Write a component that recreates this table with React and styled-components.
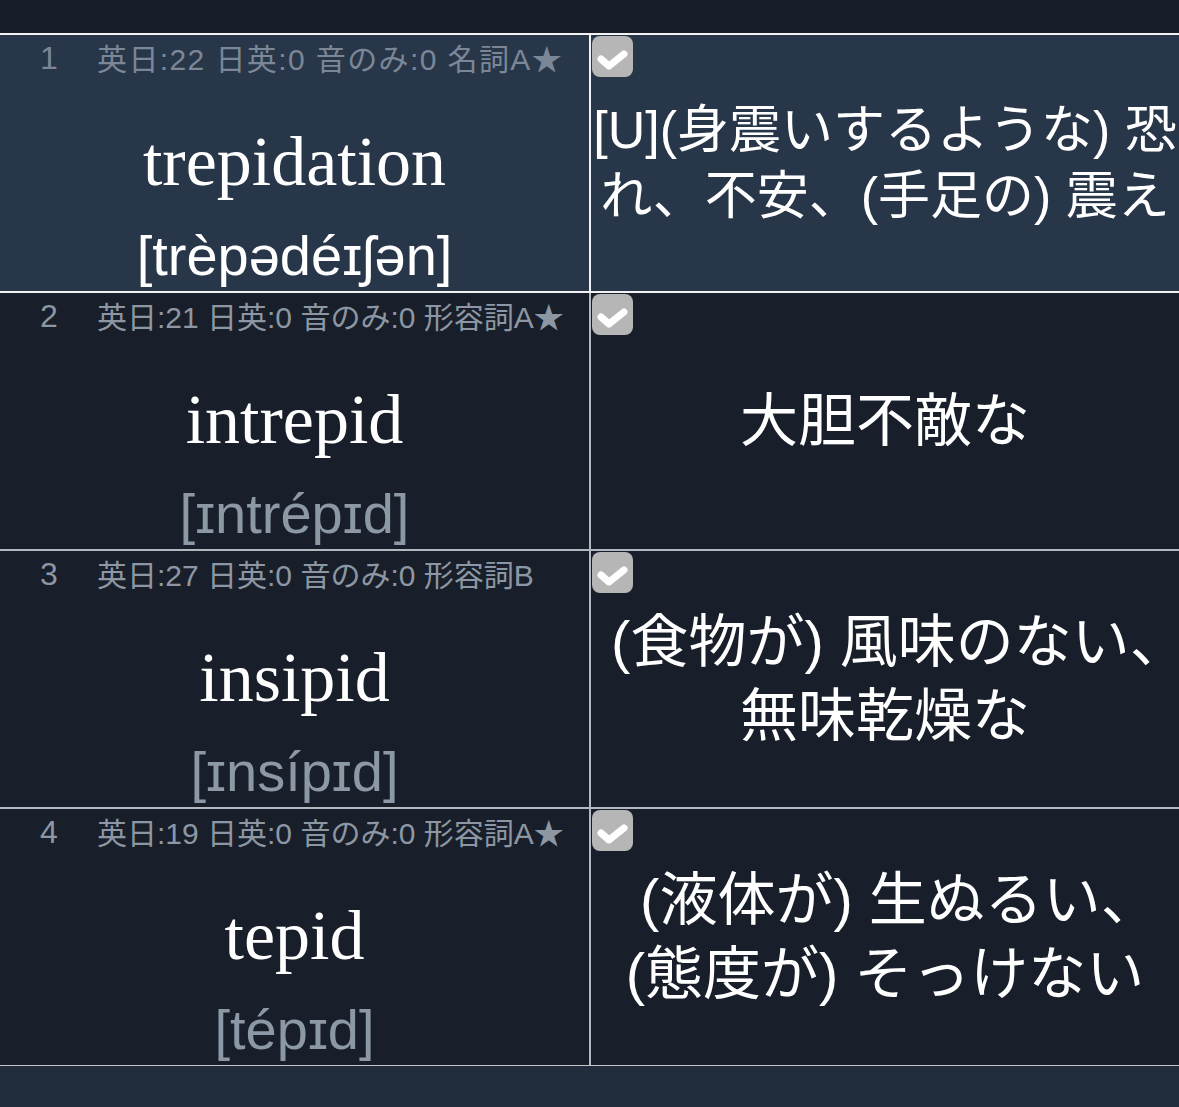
import styled, { createGlobalStyle } from 'styled-components';

const GlobalStyle = createGlobalStyle`
	body {
		margin: 0;
		background-color: #181f2a;
		font-family: 'Liberation Sans', 'Noto Sans CJK JP', sans-serif;
	}
`;

const Screen = styled.div`
	width: 1179px;
	height: 1107px;
	display: flex;
	flex-direction: column;
	background-color: #181f2a;
	overflow: hidden;
`;

const TopBar = styled.div`
	height: 33px;
	background-color: #181e29;
`;

const Row = styled.div`
	height: 256px;
	display: grid;
	grid-template-columns: 589px 1fr;
	border-top: 2px solid ${(props) => props.$line};
	background-color: ${(props) => (props.$selected ? '#283649' : '#181f2a')};
`;

const Left = styled.div`
	display: grid;
	grid-template-rows: 44px 1fr auto;
	min-width: 0;
`;

const Meta = styled.div`
	display: flex;
	align-items: center;
	color: ${(props) => (props.$selected ? '#7b8797' : '#8d97a3')};
	white-space: nowrap;
`;

const Num = styled.span`
	width: 50px;
	margin-left: 24px;
	margin-right: 23px;
	padding-top: 3px;
	text-align: center;
	font-size: 32px;
`;

const Info = styled.span`
	font-size: 30px;
	letter-spacing: ${(props) => (props.$wide ? '1.4px' : '0')};
`;

const Word = styled.div`
	display: flex;
	align-items: center;
	justify-content: center;
	padding-top: 22px;
	font-family: 'Liberation Serif', serif;
	font-size: 70px;
	line-height: 1;
	color: #ffffff;
`;

const Pron = styled.div`
	text-align: center;
	padding-bottom: 3px;
	font-family: 'Liberation Sans', 'DejaVu Sans', sans-serif;
	font-size: 56px;
	color: ${(props) => (props.$selected ? '#ffffff' : '#8c98a5')};
`;

const Right = styled.div`
	position: relative;
	display: flex;
	align-items: center;
	justify-content: center;
	border-left: 2px solid ${(props) => (props.$selected ? '#f2f2f2' : '#b4b8bf')};
`;

const Check = styled.div`
	position: absolute;
	top: 1px;
	left: 1px;
	width: 41px;
	height: 41px;
	border-radius: 8px;
	background-color: #b7b6b6;
`;

const Meaning = styled.div`
	display: flex;
	flex-direction: column;
	align-items: center;
	color: #ffffff;
	font-family: 'Liberation Sans', 'Noto Sans CJK JP', sans-serif;
	font-size: ${(props) => (props.$small ? '52px' : '58px')};
	line-height: 1.27;
`;

const Line = styled.span`
	white-space: pre;
`;

// a line-end 、 keeps only its inked half, as the iOS label trims it
const Trail = styled.span`
	letter-spacing: -0.5em;
`;

const Bottom = styled.div`
	flex: 1;
	border-top: 1px solid #c2c6cd;
	background-color: #212c3c;
`;

const words = [
	{
		word: 'trepidation',
		pron: '[trèpədéɪʃən]',
		info: '英日:22 日英:0 音のみ:0 名詞A★',
		meaning: ['[U](身震いするような) 恐', 'れ、不安、(手足の) 震え'],
		small: true,
		wide: true,
	},
	{
		word: 'intrepid',
		pron: '[ɪntrépɪd]',
		info: '英日:21 日英:0 音のみ:0 形容詞A★',
		meaning: ['大胆不敵な'],
	},
	{
		word: 'insipid',
		pron: '[ɪnsípɪd]',
		info: '英日:27 日英:0 音のみ:0 形容詞B',
		meaning: ['(食物が) 風味のない、', '無味乾燥な'],
	},
	{
		word: 'tepid',
		pron: '[tépɪd]',
		info: '英日:19 日英:0 音のみ:0 形容詞A★',
		meaning: ['(液体が) 生ぬるい、', '(態度が) そっけない'],
	},
];

function CheckMark() {
	return (
		<Check>
			<svg width="41" height="41" viewBox="0 0 41 41">
				<polyline
					points="9,23 17,30 32,18"
					fill="none"
					stroke="#ffffff"
					strokeWidth="7"
					strokeLinecap="round"
					strokeLinejoin="round"
				/>
			</svg>
		</Check>
	);
}

function MeaningLine({ text }) {
	if (text.endsWith('、')) {
		return (
			<Line>
				{text.slice(0, -1)}
				<Trail>、</Trail>
			</Line>
		);
	}
	return <Line>{text}</Line>;
}

export default function App() {
	const selected = 0;
	return (
		<>
			<GlobalStyle />
			<Screen>
				<TopBar />
				{words.map((item, idx) => {
					const isSel = idx === selected;
					const line = isSel || idx - 1 === selected ? '#f2f2f2' : '#b4b8bf';
					return (
						<Row key={idx} $selected={isSel} $line={line}>
							<Left>
								<Meta $selected={isSel}>
									<Num>{idx + 1}</Num>
									<Info $wide={item.wide}>{item.info}</Info>
								</Meta>
								<Word>{item.word}</Word>
								<Pron $selected={isSel}>{item.pron}</Pron>
							</Left>
							<Right $selected={isSel}>
								<CheckMark />
								<Meaning $small={item.small}>
									{item.meaning.map((text, i) => (
										<MeaningLine key={i} text={text} />
									))}
								</Meaning>
							</Right>
						</Row>
					);
				})}
				<Bottom />
			</Screen>
		</>
	);
}
